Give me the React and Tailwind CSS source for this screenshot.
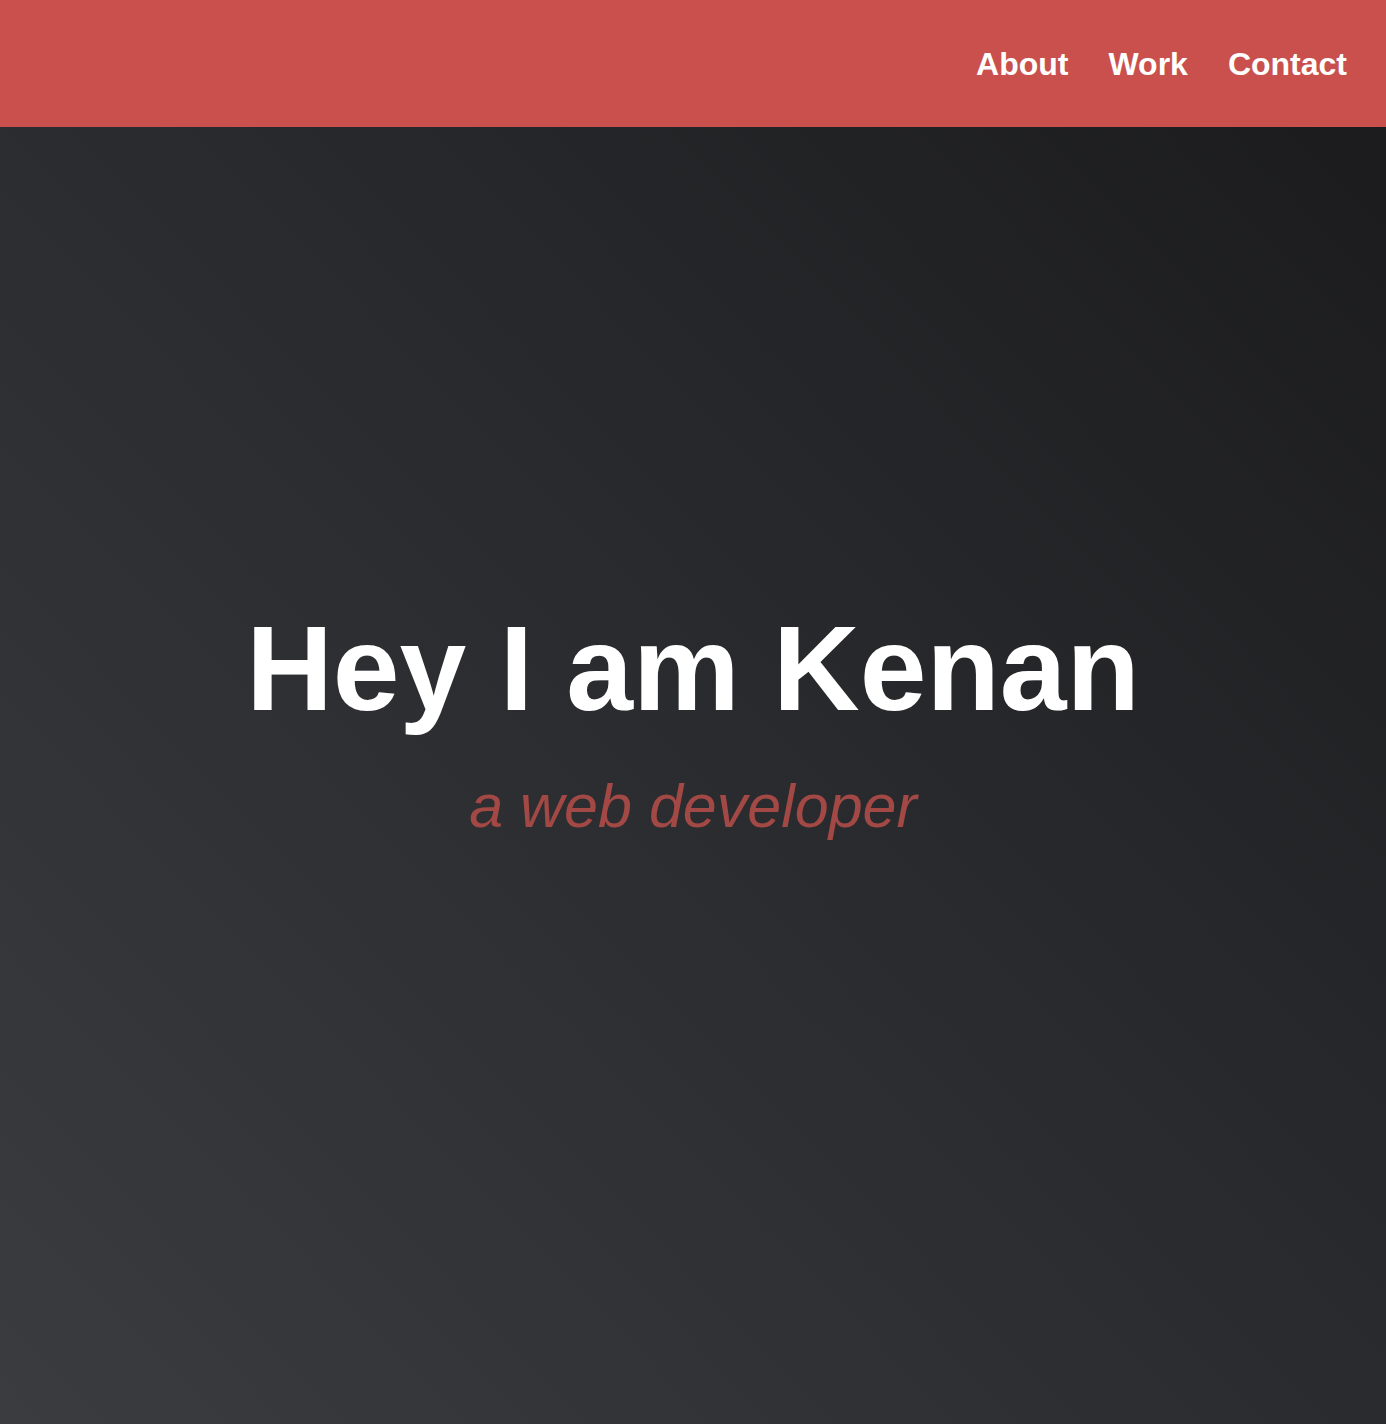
import React from 'react';

function App() {
  const links = ['About', 'Work', 'Contact'];

  return (
    <div
      className="min-h-screen flex flex-col bg-gradient-to-tr from-[#3b3c3f] via-[#2a2b2e] to-[#1a1a1c]"
      style={{ fontFamily: '"Liberation Sans", Arial, sans-serif' }}
    >
      {/* Top bar */}
      <header className="h-[127px] shrink-0 bg-[#c9504c] flex items-center justify-end pr-[39px]">
        <nav className="flex items-center gap-[40px]">
          {links.map((link) => (
            <a
              key={link}
              href="#"
              className="text-white font-bold text-[32px] leading-none"
            >
              {link}
            </a>
          ))}
        </nav>
      </header>

      {/* Hero */}
      <main className="flex-1 flex flex-col items-center justify-center pb-[106px]">
        <h1 className="text-white font-bold text-[120px] leading-none">
          Hey I am Kenan
        </h1>
        <p className="mt-[48px] text-[#a24845] italic font-light text-[61px] leading-none">
          a web developer
        </p>
      </main>
    </div>
  );
}

export default App;
